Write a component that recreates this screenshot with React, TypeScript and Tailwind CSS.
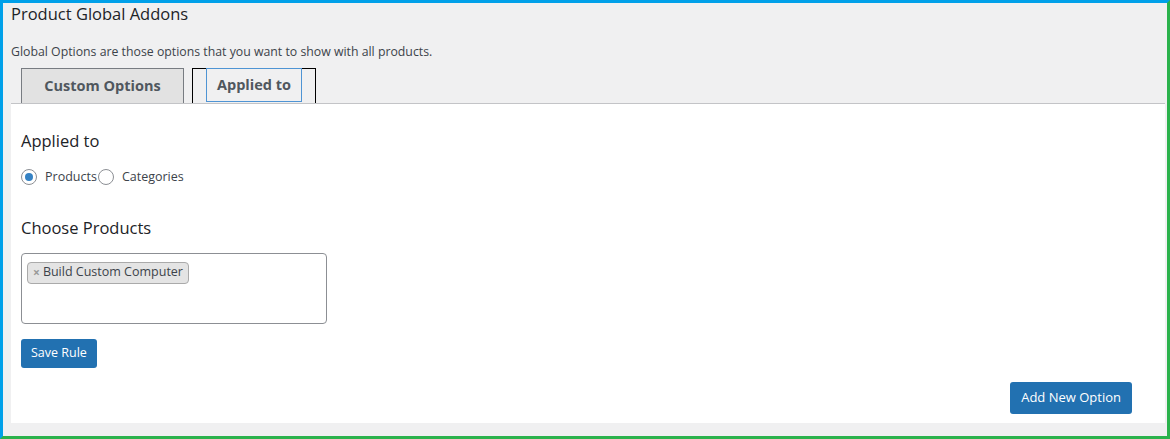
import { useState } from "react";

const font = { fontFamily: '"Open Sans", "Noto Sans", Arial, sans-serif' };

const Radio = ({ checked, label, onClick }: { checked: boolean; label: string; onClick: () => void }) => (
  <label className="flex items-center cursor-pointer" onClick={onClick}>
    <span className="w-4 h-4 rounded-full border border-[#8c8f94] bg-white flex items-center justify-center">
      {checked ? <span className="w-2 h-2 rounded-full bg-[#3582c4]" /> : null}
    </span>
    <span className="ml-2 text-[12.5px] text-[#3c434a]">{label}</span>
  </label>
);

const App = () => {
  const [tab, setTab] = useState("applied");
  const [target, setTarget] = useState("products");

  return (
    <div
      className="h-[439px] box-border border-[3px] border-t-[#00a0e9] border-l-[#00a0e9] border-r-[#2bb24c] border-b-[#2bb24c] bg-[#f0f0f1] pl-2 pr-0.5 flex flex-col"
      style={font}
    >
      <h1 className="text-[16.5px] leading-[22px] text-[#1d2327]">Product Global Addons</h1>
      <p className="text-[12.3px] leading-[18px] mt-[18px] text-[#3c434a]">Global Options are those options that you want to show with all products.</p>

      <div className="flex mt-[7px] pl-[10px] gap-2 h-[35px]">
        <button
          onClick={() => setTab("custom")}
          className={`w-[163px] h-[35px] border border-b-0 text-[14.5px] font-bold text-[#50575e] ${
            tab === "custom" ? "border-black bg-[#f0f0f1]" : "border-[#787c82] bg-[#e2e2e2]"
          }`}
        >
          Custom Options
        </button>
        <button
          onClick={() => setTab("applied")}
          className={`w-[124px] h-[35px] border border-b-0 text-[14.5px] font-bold text-[#50575e] flex justify-center ${
            tab === "applied" ? "border-black bg-[#f0f0f1]" : "border-[#787c82] bg-[#e2e2e2]"
          }`}
        >
          <span className="h-[34px] px-[10px] flex items-center border border-[#4f94d4] -mt-px">Applied to</span>
        </button>
      </div>

      <div className="bg-white border-t border-[#c3c4c7] h-[320px] pl-[10px] pr-[33px] flex flex-col">
        <h3 className="text-[16.5px] leading-[22px] mt-[26px] text-[#1d2327]">Applied to</h3>
        <div className="flex items-center mt-[16px] gap-[1px]">
          <Radio checked={target === "products"} label="Products" onClick={() => setTarget("products")} />
          <Radio checked={target === "categories"} label="Categories" onClick={() => setTarget("categories")} />
        </div>

        <h3 className="text-[16.5px] leading-[22px] mt-[30px] text-[#1d2327]">Choose Products</h3>
        <div className="mt-[14px] w-[306px] h-[71px] border border-[#8c8f94] rounded-[4px] px-[5px] pt-[5px]">
          <span className="inline-flex items-center h-[22px] px-[5px] bg-[#e4e4e4] border border-[#aaa] rounded-[4px] text-[12.5px] text-[#3c434a]">
            <span className="text-[#999] font-bold mr-[3px] text-[12px]">×</span>
            Build Custom Computer
          </span>
        </div>

        <button className="mt-[15px] self-start h-[29px] px-[10px] bg-[#2271b1] text-white text-[12.5px] rounded-[3px]">
          Save Rule
        </button>

        <button className="mt-[14px] self-end h-[32px] px-[11px] bg-[#2271b1] text-white text-[13px] rounded-[3px]">
          Add New Option
        </button>
      </div>
    </div>
  );
};

export default App;
